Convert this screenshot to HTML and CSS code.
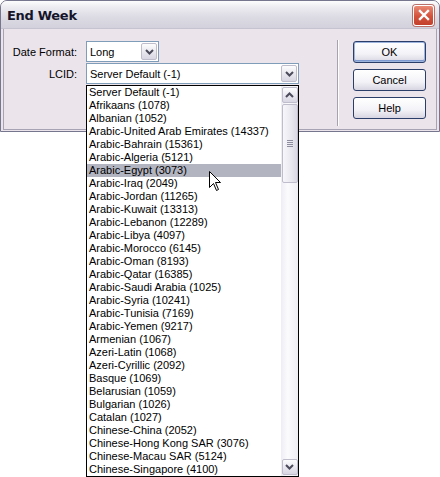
FILE: index.html
```html
<!DOCTYPE html>
<html>
<head>
<meta charset="utf-8">
<link rel="stylesheet" href="styles.css">
</head>
<body>
<div class="window">
  <div class="titlebar">
    <span class="title">End Week</span>
    <span class="close">
      <svg width="12" height="12" viewBox="0 0 12 12"><path d="M2 2 L10 10 M10 2 L2 10" stroke="#fff" stroke-width="2.4" stroke-linecap="square"/></svg>
    </span>
  </div>
  <div class="client">
    <div class="form">
      <div class="row">
        <span class="lbl">Date Format:</span>
        <div class="combo combo-short">
          <span class="val">Long</span>
          <span class="dd-btn"><svg width="9" height="6" viewBox="0 0 9 6"><path d="M1 1 L4.5 4.5 L8 1" fill="none" stroke="#4b4b5c" stroke-width="2"/></svg></span>
        </div>
      </div>
      <div class="row">
        <span class="lbl">LCID:</span>
        <div class="combo combo-long">
          <span class="val">Server Default (-1)</span>
          <span class="dd-btn"><svg width="9" height="6" viewBox="0 0 9 6"><path d="M1 1 L4.5 4.5 L8 1" fill="none" stroke="#4b4b5c" stroke-width="2"/></svg></span>
        </div>
      </div>
    </div>
    <div class="sep"></div>
    <div class="buttons">
      <div class="btn btn-default">OK</div>
      <div class="btn">Cancel</div>
      <div class="btn">Help</div>
    </div>
  </div>
</div>

<div class="droplist">
  <ul class="items">
    <li>Server Default (-1)</li>
    <li>Afrikaans (1078)</li>
    <li>Albanian (1052)</li>
    <li>Arabic-United Arab Emirates (14337)</li>
    <li>Arabic-Bahrain (15361)</li>
    <li>Arabic-Algeria (5121)</li>
    <li class="sel">Arabic-Egypt (3073)</li>
    <li>Arabic-Iraq (2049)</li>
    <li>Arabic-Jordan (11265)</li>
    <li>Arabic-Kuwait (13313)</li>
    <li>Arabic-Lebanon (12289)</li>
    <li>Arabic-Libya (4097)</li>
    <li>Arabic-Morocco (6145)</li>
    <li>Arabic-Oman (8193)</li>
    <li>Arabic-Qatar (16385)</li>
    <li>Arabic-Saudi Arabia (1025)</li>
    <li>Arabic-Syria (10241)</li>
    <li>Arabic-Tunisia (7169)</li>
    <li>Arabic-Yemen (9217)</li>
    <li>Armenian (1067)</li>
    <li>Azeri-Latin (1068)</li>
    <li>Azeri-Cyrillic (2092)</li>
    <li>Basque (1069)</li>
    <li>Belarusian (1059)</li>
    <li>Bulgarian (1026)</li>
    <li>Catalan (1027)</li>
    <li>Chinese-China (2052)</li>
    <li>Chinese-Hong Kong SAR (3076)</li>
    <li>Chinese-Macau SAR (5124)</li>
    <li>Chinese-Singapore (4100)</li>
  </ul>
  <div class="scrollbar">
    <span class="sb-btn"><svg width="9" height="6" viewBox="0 0 9 6"><path d="M1 5 L4.5 1.5 L8 5" fill="none" stroke="#4b4b5c" stroke-width="2"/></svg></span>
    <span class="thumb">
      <span class="grip"></span><span class="grip"></span><span class="grip"></span><span class="grip"></span>
    </span>
    <span class="track"></span>
    <span class="sb-btn"><svg width="9" height="6" viewBox="0 0 9 6"><path d="M1 1 L4.5 4.5 L8 1" fill="none" stroke="#4b4b5c" stroke-width="2"/></svg></span>
  </div>
</div>

<svg class="cursor" width="13" height="21" viewBox="0 0 13 21">
  <path d="M0.5 0.5 L0.5 16.5 L4.5 12.5 L7.5 19.5 L9.5 18.5 L6.5 11.5 L11.5 11.5 Z" fill="#fff" stroke="#000" stroke-width="1" stroke-linejoin="miter"/>
</svg>
</body>
</html>
```

FILE: styles.css
```css
html, body {
  margin: 0;
  padding: 0;
  background: #ffffff;
}
body {
  width: 440px;
  height: 477px;
  overflow: hidden;
  position: relative;
  font-family: "Liberation Sans", Arial, sans-serif;
  font-size: 11px;
  color: #000;
}
.window {
  box-sizing: border-box;
  width: 440px;
  height: 132px;
  border: 1px solid #76768f;
  border-radius: 7px 7px 0 0;
  background: #ebe4eb;
  display: flex;
  flex-direction: column;
}
.titlebar {
  height: 27px;
  flex: none;
  display: flex;
  align-items: center;
  padding: 0 5px 0 6px;
  border-radius: 6px 6px 0 0;
  background: linear-gradient(#fdfdfe 0%, #ebebf0 25%, #dcdbe4 60%, #d3d2dc 100%);
  border-bottom: 1px solid #c4c3cf;
}
.title {
  font-family: "DejaVu Sans", sans-serif;
  font-weight: bold;
  font-size: 13px;
  color: #14142a;
  letter-spacing: -0.3px;
  padding-top: 2px;
}
.close {
  margin-left: auto;
  width: 19px;
  height: 19px;
  border: 1px solid #fff;
  border-radius: 3px;
  background: linear-gradient(#e98a75, #d2523c 55%, #c2402c);
  display: flex;
  align-items: center;
  justify-content: center;
  box-shadow: 0 0 0 1px #b9706a;
  margin-top: 1px;
}
.client {
  flex: 1;
  margin: 0 2px 1px 2px;
  border: 1px solid #a8a3b4;
  border-top: none;
  display: flex;
  align-items: flex-start;
}
.form {
  padding-top: 12px;
  display: flex;
  flex-direction: column;
  gap: 1px;
}
.row {
  display: flex;
  align-items: center;
  gap: 9px;
  height: 21px;
}
.lbl {
  width: 73px;
  text-align: right;
}
.combo {
  box-sizing: border-box;
  height: 21px;
  border: 1px solid #7f9db9;
  background: #fff;
  display: flex;
  align-items: center;
  padding: 1px;
}
.combo-short { width: 73px; }
.combo-long { width: 213px; }
.val {
  flex: 1;
  padding-left: 2px;
  white-space: nowrap;
}
.dd-btn, .sb-btn {
  box-sizing: border-box;
  width: 16px;
  height: 17px;
  flex: none;
  border: 1px solid #bfbdcc;
  border-radius: 2px;
  background: linear-gradient(#fdfdfe, #eae9f0 50%, #d8d6e2);
  display: flex;
  align-items: center;
  justify-content: center;
}
.sep {
  width: 1px;
  height: 86px;
  margin: 11px 0 0 38px;
  background: #a7a2b2;
  border-right: 1px solid #fff;
}
.buttons {
  margin: 12px 0 0 14px;
  display: flex;
  flex-direction: column;
  gap: 6px;
}
.btn {
  box-sizing: border-box;
  width: 73px;
  height: 22px;
  border: 1px solid #2b3e6a;
  border-radius: 3px;
  background: linear-gradient(#ffffff, #f3f2f7 60%, #d7d5e1);
  display: flex;
  align-items: center;
  justify-content: center;
}
.btn-default {
  box-shadow: inset 0 0 0 1px #9db4dd, inset 0 -1px 0 1px #7e9ad0;
}
.droplist {
  position: absolute;
  left: 86px;
  top: 85px;
  width: 213px;
  height: 392px;
  box-sizing: border-box;
  border: 1px solid #000;
  background: #fff;
  display: flex;
}
.items {
  list-style: none;
  margin: 0;
  padding: 0;
  flex: 1;
}
.items li {
  height: 13px;
  line-height: 13px;
  padding-left: 2px;
  white-space: nowrap;
}
.items li.sel {
  background: #b2b4bf;
}
.scrollbar {
  width: 17px;
  flex: none;
  display: flex;
  flex-direction: column;
  align-items: center;
  background: linear-gradient(90deg, #eeedf4, #fbfbfd 40%, #eeedf4);
}
.sb-btn {
  width: 16px;
  height: 16px;
  margin: 1px 0;
}
.thumb {
  box-sizing: border-box;
  width: 16px;
  height: 79px;
  border: 1px solid #bfbdcc;
  border-radius: 2px;
  background: linear-gradient(90deg, #f7f7fa, #e8e7ef 60%, #dad8e3);
  display: flex;
  flex-direction: column;
  align-items: center;
  justify-content: center;
  gap: 1px;
}
.grip {
  width: 6px;
  height: 1px;
  background: #8e8da0;
}
.track {
  flex: 1;
}
.cursor {
  position: absolute;
  left: 209px;
  top: 171px;
}
```
